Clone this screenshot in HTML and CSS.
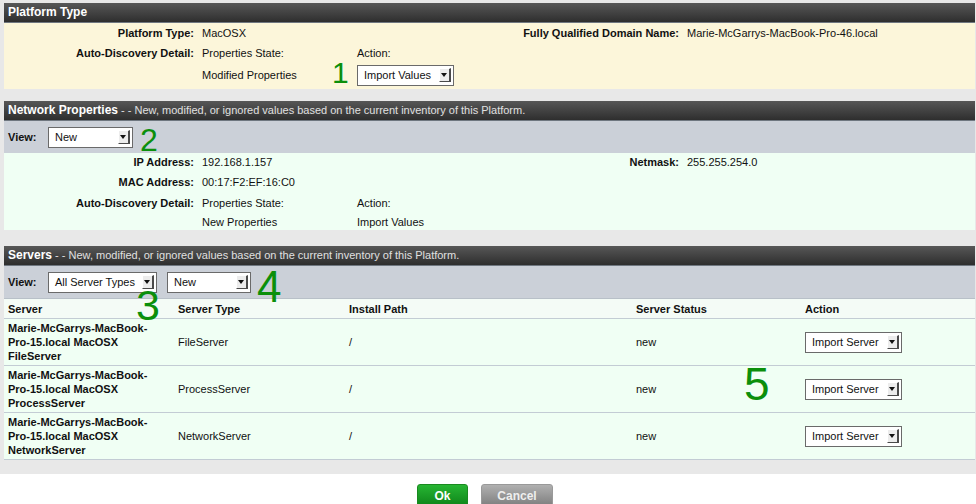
FILE: index.html
```html
<!DOCTYPE html>
<html>
<head>
<meta charset="utf-8">
<link rel="stylesheet" href="styles.css">
</head>
<body>
<div class="page">
  <section class="section">
    <div class="shead"><b>Platform Type</b></div>
    <div class="panel yellow">
      <div class="grid g1">
        <div class="lbl">Platform Type:</div>
        <div class="val">MacOSX</div>
        <div class="lbl">Fully Qualified Domain Name:</div>
        <div class="val">Marie-McGarrys-MacBook-Pro-46.local</div>

        <div class="lbl">Auto-Discovery Detail:</div>
        <div class="val">Properties State:</div>
        <div class="val c3">Action:</div>

        <div class="lbl"></div>
        <div class="val">Modified Properties</div>
        <div class="val c3"><span class="sel w97"><span class="st">Import Values</span><span class="arr"></span></span></div>
      </div>
      <span class="num n1">1</span>
    </div>
  </section>

  <section class="section s2">
    <div class="shead"><b>Network Properties</b><span class="sub"> - - New, modified, or ignored values based on the current inventory of this Platform.</span></div>
    <div class="viewbar">
      <span class="vlabel">View:</span>
      <span class="sel w85"><span class="st">New</span><span class="arr"></span></span>
      <span class="num n2">2</span>
    </div>
    <div class="panel green">
      <div class="grid g2">
        <div class="lbl">IP Address:</div>
        <div class="val">192.168.1.157</div>
        <div class="lbl">Netmask:</div>
        <div class="val">255.255.254.0</div>

        <div class="lbl">MAC Address:</div>
        <div class="val full">00:17:F2:EF:16:C0</div>

        <div class="lbl">Auto-Discovery Detail:</div>
        <div class="val">Properties State:</div>
        <div class="val c3">Action:</div>

        <div class="lbl"></div>
        <div class="val">New Properties</div>
        <div class="val c3">Import Values</div>
      </div>
    </div>
  </section>

  <section class="section s3">
    <div class="shead"><b>Servers</b><span class="sub"> - - New, modified, or ignored values based on the current inventory of this Platform.</span></div>
    <div class="viewbar">
      <span class="vlabel">View:</span>
      <span class="sel w109"><span class="st">All Server Types</span><span class="arr"></span></span>
      <span class="sel w84"><span class="st">New</span><span class="arr"></span></span>
      <span class="num n3">3</span>
      <span class="num n4">4</span>
    </div>
    <div class="table">
      <div class="trow thead">
        <div class="cell">Server</div>
        <div class="cell">Server Type</div>
        <div class="cell">Install Path</div>
        <div class="cell">Server Status</div>
        <div class="cell">Action</div>
      </div>
      <div class="trow">
        <div class="cell name">Marie-McGarrys-MacBook-Pro-15.local MacOSX FileServer</div>
        <div class="cell">FileServer</div>
        <div class="cell">/</div>
        <div class="cell">new</div>
        <div class="cell"><span class="sel w97"><span class="st">Import Server</span><span class="arr"></span></span></div>
      </div>
      <div class="trow">
        <div class="cell name">Marie-McGarrys-MacBook-Pro-15.local MacOSX ProcessServer</div>
        <div class="cell">ProcessServer</div>
        <div class="cell">/</div>
        <div class="cell">new</div>
        <div class="cell"><span class="sel w97"><span class="st">Import Server</span><span class="arr"></span></span></div>
      </div>
      <div class="trow">
        <div class="cell name">Marie-McGarrys-MacBook-Pro-15.local MacOSX NetworkServer</div>
        <div class="cell">NetworkServer</div>
        <div class="cell">/</div>
        <div class="cell">new</div>
        <div class="cell"><span class="sel w97"><span class="st">Import Server</span><span class="arr"></span></span></div>
      </div>
      <span class="num n5">5</span>
    </div>
  </section>

  <div class="footer">
    <button class="btn ok">Ok</button>
    <button class="btn cancel">Cancel</button>
  </div>
</div>
</body>
</html>
```

FILE: styles.css
```css
html, body {
  margin: 0;
  padding: 0;
  background: #e8e8e8;
  font-family: "Liberation Sans", Arial, sans-serif;
  font-size: 11px;
  color: #111;
}
.page {
  padding: 3px 1px 0 4px;
  width: 971px;
}
.section { position: relative; }
.s2 { margin-top: 12px; }
.s3 { margin-top: 16px; }
.shead {
  height: 19px;
  line-height: 19px;
  padding-left: 4px;
  color: #fff;
  background: linear-gradient(#575757, #2e2e2e);
  border-bottom: 1px solid #6f7780;
  white-space: nowrap;
  overflow: hidden;
}
.shead b { font-size: 12px; }
.sub { font-size: 11px; color: #e0e0e0; }

.panel { position: relative; }
.yellow { background: #fcf6da; height: 66px; }
.green { background: #f0fff4; height: 77px; }

.grid {
  display: grid;
  grid-template-columns: 194px 155px 330px 1fr;
}
.g1 { grid-template-rows: 19px 21px 24px; }
.g2 { grid-template-rows: 17px 24px 17px 21px; }
.grid > div { display: flex; align-items: center; }
.lbl { font-weight: bold; justify-content: flex-end; padding-right: 4px; }
.val { padding-left: 4px; white-space: nowrap; }
.c3 { grid-column: 3 / span 2; }
.full { grid-column: 2 / span 3; }

.sel {
  display: inline-flex;
  align-items: center;
  justify-content: space-between;
  box-sizing: border-box;
  height: 21px;
  background: #fff;
  border: 1px solid #6a6a6a;
  padding: 0 2px 0 6px;
  font-size: 11px;
  color: #111;
  vertical-align: middle;
}
.w97 { width: 97px; }
.w85 { width: 85px; }
.w109 { width: 109px; }
.w84 { width: 84px; }
.arr {
  position: relative;
  width: 9px;
  height: 12px;
  background: #ececec;
  border-right: 2px solid #4a4a4a;
  border-bottom: 1px solid #4a4a4a;
  border-top: 1px solid #fff;
  border-left: 1px solid #fff;
}
.arr::after {
  content: "";
  position: absolute;
  left: 1px;
  top: 4px;
  border-left: 3.5px solid transparent;
  border-right: 3.5px solid transparent;
  border-top: 4px solid #111;
}

.viewbar {
  position: relative;
  background: #cbd0d8;
  height: 32px;
  display: flex;
  align-items: center;
  gap: 10px;
  padding-left: 4px;
}
.vlabel { font-weight: bold; width: 30px; }

.table { position: relative; }
.trow {
  display: grid;
  grid-template-columns: 170px 171px 287px 170px 1fr;
  background: #f0fff4;
  border-bottom: 1px solid #c3ccd4;
  height: 46px;
}
.trow.thead {
  background: #f4fbf6;
  height: 19px;
  border-top: 1px solid #b8c0c8;
  border-bottom: 1px solid #c3ccd4;
  font-weight: bold;
}
.cell {
  display: flex;
  align-items: center;
  padding-left: 4px;
  padding-right: 4px;
  line-height: 14px;
}
.cell.name { font-weight: bold; padding-right: 10px; }
.trow .cell:last-child { padding-left: 3px; }

.num {
  position: absolute;
  z-index: 5;
  color: #0b8f0b;
  font-family: "Liberation Sans", Arial, sans-serif;
  line-height: 1;
}
.n1 { font-size: 30px; left: 328px; top: 35px; }
.n2 { font-size: 32px; left: 136px; top: 3px; }
.n3 { font-size: 43px; left: 132px; top: 18px; }
.n4 { font-size: 44px; left: 253px; top: -1px; }
.n5 { font-size: 46px; left: 740px; top: 63px; }

.footer {
  margin-top: 14px;
  background: #fff;
  height: 21px;
  display: flex;
  justify-content: center;
  gap: 13px;
  padding-top: 10px;
  margin-left: -4px;
  margin-right: -1px;
  padding-right: 6px;
  overflow: hidden;
}
.btn {
  height: 26px;
  font-family: "Liberation Sans", Arial, sans-serif;
  font-weight: bold;
  font-size: 12px;
  border-radius: 3px 3px 0 0;
  padding: 0;
  line-height: 22px;
  align-self: flex-start;
  display: flex;
  justify-content: center;
}
.ok {
  width: 51px;
  color: #fff;
  background: linear-gradient(#27b533, #0b7d16);
  border: 1px solid #1a8a20;
}
.cancel {
  width: 72px;
  color: #eee;
  background: linear-gradient(#b0b0b0, #777);
  border: 1px solid #999;
}
```
